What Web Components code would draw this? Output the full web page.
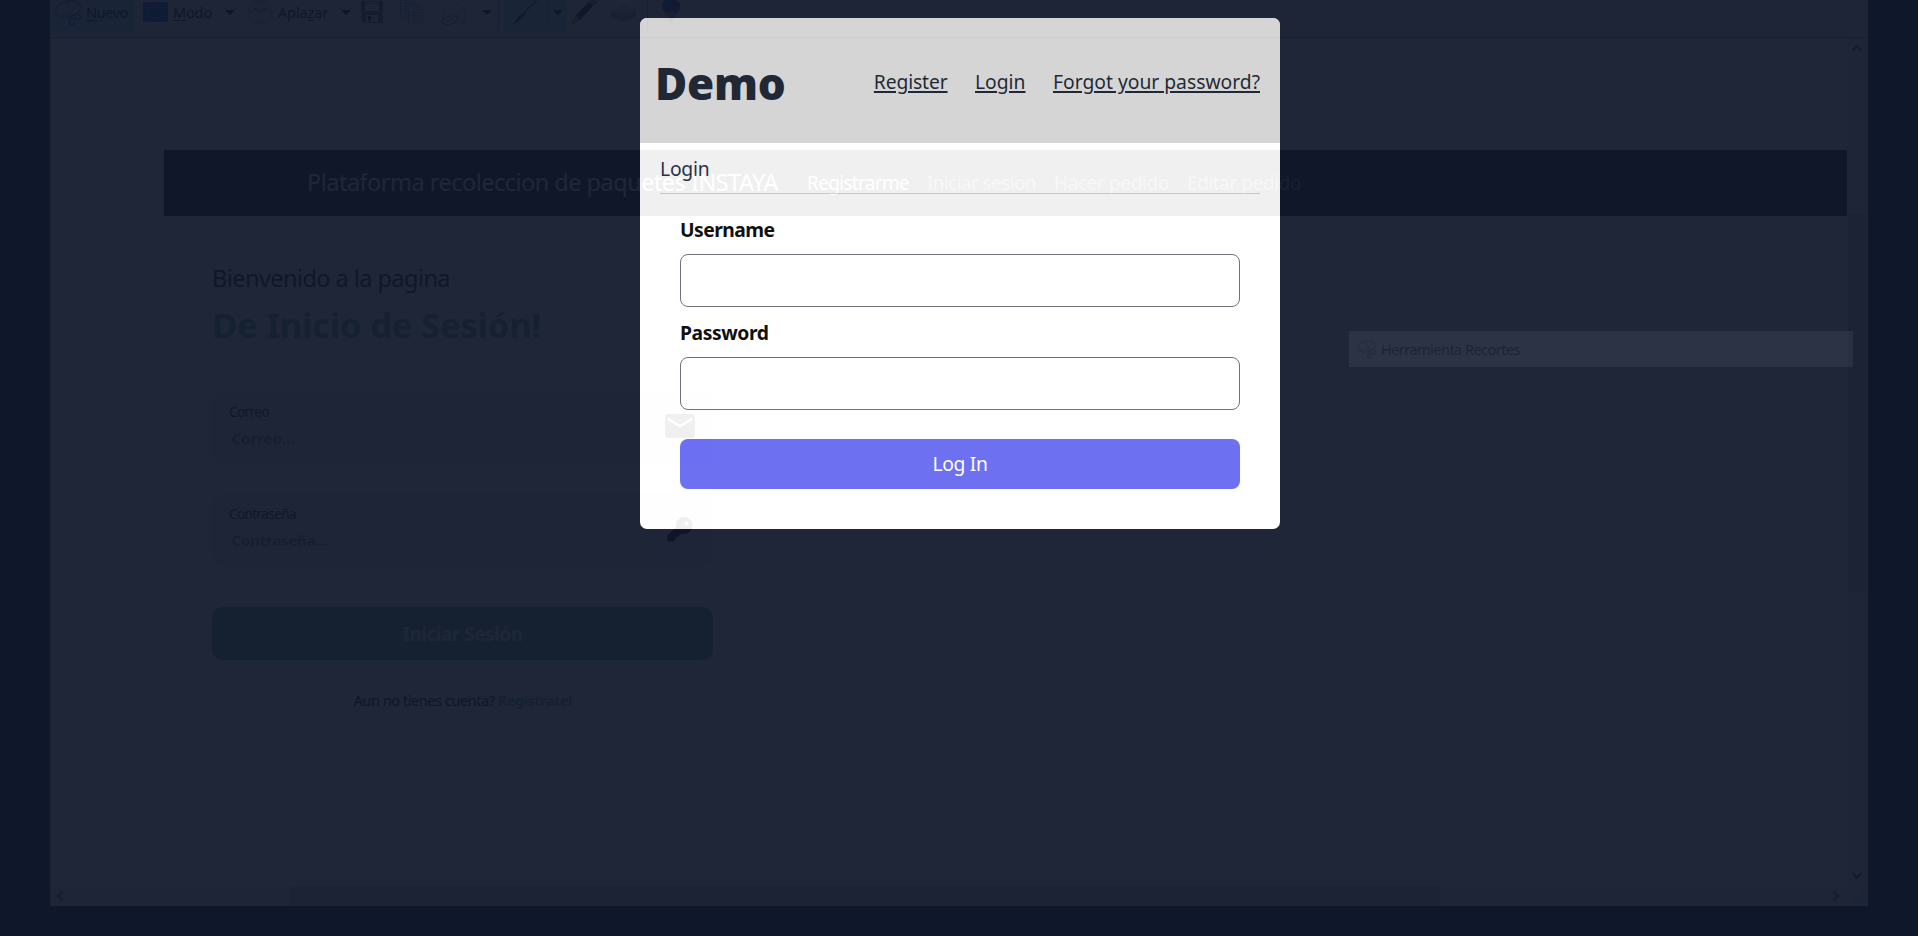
<!DOCTYPE html>
<html lang="es">
<head>
<meta charset="utf-8">
<title>Demo</title>
<style>
html,body{margin:0;height:100%;overflow:hidden;background:#0f172a}
body{font-family:"Noto Sans","Open Sans",sans-serif;position:relative}
</style>
</head>
<body>
<demo-card></demo-card>
<snip-ghost></snip-ghost>
<script>
const define = (name, html, after) => {
  const t = document.createElement('template');
  t.innerHTML = html;
  customElements.define(name, class extends HTMLElement {
    constructor() {
      super();
      this.attachShadow({ mode: 'open' }).append(t.content.cloneNode(true));
    }
    connectedCallback() { if (after) after(this, this.shadowRoot); }
  });
};

/* One line of text set to an exact advance width through its tracking. */
define('fit-text', `<style>:host{display:block;white-space:nowrap;flex:none}span{display:inline-block;text-decoration:var(--line,none);text-decoration-thickness:2px;text-underline-offset:1.5px}</style><span><slot></slot></span>`,
  (el, root) => {
    const w = parseFloat(el.getAttribute('w'));
    const span = root.querySelector('span');
    const n = el.textContent.length;
    span.style.letterSpacing = ((w - span.getBoundingClientRect().width) / n) + 'px';
    el.style.width = w + 'px';
  });

define('form-field', `<style>
:host{display:block;height:103px}
.l{font-size:19.3px;font-weight:700;line-height:30px;height:30px;color:#000;margin:-2px 0 9px}
input{display:block;box-sizing:border-box;width:100%;height:53px;border:1px solid #64697a;border-radius:8px;background:#fff;padding:0 15px;outline:0}
</style><div class="l"><slot></slot></div><input>`);

define('demo-card', `<style>
:host{display:block;box-sizing:border-box;width:640px;height:529px;padding-top:18px;margin:0 auto 0 640px}
.card{height:511px;border-radius:7px;background:#fff;overflow:hidden}
header{height:125px;background:#d3d3d3;display:flex;justify-content:space-between;align-items:flex-start;box-sizing:border-box;padding:0 20px 0 15px;color:#111827}
h1{margin:34.500px 0 0;font-size:44px;line-height:60px;font-weight:900}
nav{display:flex;gap:27.5px;margin-top:49px;font-size:19.3px;line-height:30px;--line:underline}
.t{margin:0 20px;height:51px;border-bottom:1px solid #d3d3d3;font-size:19.3px;line-height:30px;color:#27344d;box-sizing:border-box;padding-top:11px}
form{display:block;margin:0 40px;padding-top:23px}
form-field{display:flow-root}
button{display:flex;justify-content:center;align-items:center;width:100%;height:50px;border:0;border-radius:8px;background:#6366f1;color:#fff;font:19.3px/30px "Noto Sans",sans-serif;margin-top:16px;padding:0}
</style>
<div class="card">
<header><h1><fit-text w="130.5">Demo</fit-text></h1>
<nav><fit-text w="73.7">Register</fit-text><fit-text w="50.5">Login</fit-text><fit-text w="207">Forgot your password?</fit-text></nav></header>
<div class="t"><fit-text w="49.5">Login</fit-text></div>
<form><form-field><fit-text w="94.5">Username</fit-text></form-field><form-field><fit-text w="88.5">Password</fit-text></form-field>
<button type="button"><fit-text w="55">Log In</fit-text></button></form>
</div>`);

define('drop-arrow', `<style>:host{display:block;width:10px;height:5px;flex:none}svg{display:block}</style><svg width="10" height="5"><path d="M0 0h10L5 5z" fill="#111"/></svg>`);

define('scissors-icon', `<style>:host{display:block;flex:none;opacity:.75}svg{display:block;width:100%;height:100%}</style>
<svg viewBox="0 0 27 27" fill="none"><ellipse cx="13" cy="9" rx="12.5" ry="8" transform="rotate(-14 13 9)" stroke="#e8242f" stroke-width="1.5"/><path d="M4 15 19 14M11 1l7 16M23 2 14 16" stroke="#999" stroke-width="1.5"/><ellipse cx="23" cy="17" rx="3.2" ry="2.4" transform="rotate(35 23 17)" stroke="#1280e8" stroke-width="2"/><ellipse cx="17" cy="22" rx="2.3" ry="3.6" stroke="#1280e8" stroke-width="2"/></svg>`);

define('snip-toolbar', `<style>
:host{display:flex;align-items:flex-start;height:38px;box-sizing:border-box;border-bottom:1px solid #999;background:#f5f6f7;font:14.5px/24px "Noto Sans",sans-serif;color:#222;overflow:hidden}
svg{display:block;flex:none}
.hl{background:#bce4f6;height:32px;display:flex;align-items:flex-start;flex:none;box-sizing:border-box}
u{text-underline-offset:2px}
.sep{width:1px;height:31px;background:#aaa;flex:none}
.soft{opacity:.7}
drop-arrow{margin-top:10px}
fit-text{margin-top:-.5px}
</style>
<div class="hl" style="width:84px;padding-left:5px"><scissors-icon style="width:27px;height:27px"></scissors-icon><fit-text w="42" style="margin-left:4px"><u>N</u>uevo</fit-text></div>
<svg width="25" height="20" style="margin:2px 0 0 9px"><path fill="#0078d7" d="M0 0h25v20H0z"/><path d="M5.500 5.500h13v10h-13z" fill="#0064b8" stroke="#c8e4ff" stroke-dasharray="1.500 1.500"/></svg>
<fit-text w="39" style="margin-left:5px"><u>M</u>odo</fit-text>
<drop-arrow style="margin-left:13px"></drop-arrow>
<svg class="soft" width="26" height="26" style="margin:-1px 0 0 12px" viewBox="0 0 26 26"><circle cx="13" cy="13" r="11.500" fill="#cfdce6" stroke="#a2adb6" stroke-width="2"/><path d="M7 9l5 4.500L20 9" fill="none" stroke="#333" stroke-width="1.400"/><path d="M13 3v2M13 21v2M3 13h2M21 13h2" stroke="#555"/></svg>
<fit-text w="50" style="margin-left:5px">Apla<u>z</u>ar</fit-text>
<drop-arrow style="margin-left:13px"></drop-arrow>
<svg width="22" height="22" style="margin:1px 0 0 10px"><path d="M0 0h22v22H3l-3-3z" fill="#626a7a"/><path d="M4 1h14v9H4z" fill="#eef4fa"/><path d="M4 2h14v1H4z" fill="#5aa9dd"/><path d="M5 14h12v7H5z" fill="#e6e6e6"/><path d="M7 15h3v5H7z" fill="#333"/></svg>
<svg class="soft" width="25" height="25" style="margin:0 0 0 17px" fill="#d8eafa" stroke="#7c94ac"><path d="M.5-1h12l2 2v17H.5z"/><path d="M8.500 5.500h10l4 4v14.500h-14z"/><path d="M18.500 5.500v4h4M11 12.500h9M11 15.500h9M11 18.500h9M11 21.500h7M3 3.500h8M3 6.500h5M3 9.500h5" fill="none" stroke="#5b9bd0"/></svg>
<svg class="soft" width="26" height="26" style="margin:0 0 0 16px" fill="none" stroke="#999"><path d="M2 24V9L13 1l11 8v14H14"/><path d="M2 9l11 8L24 9M24 23l-8-8"/><ellipse cx="8.500" cy="20.500" rx="8" ry="4" transform="rotate(-16 8.500 20.500)" stroke="#777" stroke-width="1.500"/><path d="M5 21l7-2"/></svg>
<drop-arrow style="margin-left:15px"></drop-arrow>
<div class="sep" style="margin-left:6px"></div>
<div class="hl" style="width:63px;margin-left:5px"><svg width="44" height="31"><path d="M9 25l5-8 6-5 2 2-5 5z" fill="#2b3038"/><path d="M18 15L34-1" stroke="#728490" stroke-width="1.800"/></svg><div class="sep" style="opacity:.6"></div><drop-arrow style="margin-left:4px"></drop-arrow></div>
<svg width="26" height="26" style="margin:0 0 0 4px"><path d="M4 16L20 0h4l2 2L9 20z" fill="#23262c"/><path d="M17 2l3-3h5l1 4-4 3zM4 15l5 5-7 4-2-1z" fill="#a5a02c"/></svg>
<svg class="soft" width="25" height="17" style="margin:5px 0 0 14px"><path d="M0 7L12 0l13 5v6l-12 6-13-4z" fill="#bbb7c2"/><path d="M0 7l13 4v6L0 13zM13 11l12-6v6l-12 6z" fill="#88889a"/></svg>
<div class="sep" style="margin-left:11px"></div>
<svg width="18" height="24" style="margin:0 0 0 14px"><path d="M0 6a9 8 0 0 1 18 0c0 6-5 8-8 16C8 14 0 12 0 6z" fill="#2a6fe0"/><path d="M3 12l12 0-6 11z" fill="#e48a9c"/><path d="M9-2a9 8 0 0 1 9 8c0 3-1 5-3 6L9 8z" fill="#503aaf"/></svg>`);

define('ghost-field', `<style>
:host{display:flex;justify-content:space-between;box-sizing:border-box;width:501px;height:73px;border-radius:10px;background:#f4f4f4;padding:0 18px 0 17px}
.l{font-size:13.500px;line-height:20px;margin-top:11px;color:#212529}
.v{font-size:15px;line-height:24px;margin:4px 0 0 2.500px;font-weight:700;color:#80858a}
</style><div><div class="l"><slot name="label"></slot></div><div class="v"><slot name="value"></slot></div></div><slot name="icon"></slot>`);

define('store-page', `<style>
:host{display:block;background:#fff;overflow:hidden;font-family:"Noto Sans",sans-serif}
.bar{margin:112px 0 0 113px;height:66px;background:#212529;display:flex;box-sizing:border-box;padding-left:143px;color:#fff;font-size:19px;line-height:30px}
.bar .b{font-size:23.500px;line-height:36px;margin:14px 29px 0 0}
.bar fit-text{margin:18px 18px 0 0}
.dim{color:rgba(255,255,255,.52)}
main{margin-left:161px;width:501px}
.w{font-size:23.500px;line-height:36px;padding-top:44px;color:#212529}
.h{font-size:34.500px;line-height:50px;font-weight:700;color:#70ba99;margin-top:4px}
ghost-field svg{display:block}
.go{height:53px;border-radius:10px;background:#70ba99;margin-top:41px;display:flex;justify-content:center;align-items:center;font-size:18.800px;line-height:30px;font-weight:700;color:#fff}
.go fit-text{margin-top:1px}
.r{display:flex;gap:3px;justify-content:center;margin-top:27.500px;font-size:14.800px;line-height:24px;color:#111}
.r b{color:#70ba99}
</style>
<div class="bar"><fit-text class="b" w="471">Plataforma recoleccion de paquetes INSTAYA</fit-text><fit-text w="102">Registrarme</fit-text><fit-text class="dim" w="109">Iniciar sesion</fit-text><fit-text class="dim" w="115">Hacer pedido</fit-text><fit-text class="dim" w="114">Editar pedido</fit-text></div>
<main>
<div class="w"><fit-text w="238">Bienvenido a la pagina</fit-text></div>
<div class="h"><fit-text w="329">De Inicio de Sesión!</fit-text></div>
<ghost-field style="margin-top:41px"><fit-text slot="label" w="40">Correo</fit-text><fit-text slot="value" w="63">Correo...</fit-text>
<svg slot="icon" width="30" height="24" style="margin-top:23px"><rect width="30" height="24" rx="3" fill="#222"/><path d="M3.500 5L12 10.500q3 2 6 0L26.500 5" fill="none" stroke="#fff" stroke-width="2.400" stroke-linecap="round"/></svg></ghost-field>
<ghost-field style="margin-top:29px"><fit-text slot="label" w="67">Contraseña</fit-text><fit-text slot="value" w="96">Contraseña...</fit-text>
<svg slot="icon" width="26" height="25" style="margin:24px 2px 0 0"><path fill-rule="evenodd" d="M17 0a8.500 8.500 0 0 1 0 17h-3l-3 3H9v2l-2.500 2.500H1L0 23v-4l9-9A8.500 8.500 0 0 1 17 0zm2.500 4.500a2 2 0 1 0 .1 4 2 2 0 0 0-.1-4z" fill="#111"/></svg></ghost-field>
<div class="go"><fit-text w="120">Iniciar Sesión</fit-text></div>
<div class="r"><fit-text w="141">Aun no tienes cuenta?</fit-text><b><fit-text w="74">Registrate!</fit-text></b></div>
</main>`);

define('scroll-bar', `<style>
:host{display:flex;justify-content:space-between;align-items:center;background:#f0f0f0;box-sizing:border-box}
:host([vertical]){flex-direction:column}
svg{display:block;flex:none}
.thumb{background:#d6d6d6;flex:none}
:host([vertical]) .thumb{width:18px;height:379px;margin:161px 0 auto}
:host(:not([vertical])) .thumb{height:18px;width:1150px;margin:0 auto 0 226px}
:host([vertical]) svg{transform:rotate(90deg)}
path{fill:none;stroke:#555;stroke-width:2}
</style><svg width="8" height="10"><path d="M7 .5L2 5l5 4.500"/></svg><div class="thumb"></div><svg width="8" height="10"><path d="M1 .5L6 5 1 9.500"/></svg>`);

define('snip-window', `<style>
:host{display:block;position:absolute;left:1349px;top:331px;width:504px;height:330px;opacity:.06}
.t{height:36px;background:#fff;display:flex;box-sizing:border-box;padding:9px 0 0 8px;font:14.500px/24px "Noto Sans",sans-serif;color:#000}
fit-text{margin:-3.500px 0 0 4px}
.b{height:294px;background:rgba(255,255,255,.06)}
</style><div class="t"><scissors-icon style="width:20px;height:19px"></scissors-icon><fit-text w="139">Herramienta Recortes</fit-text></div><div class="b"></div>`);

/* Translucent capture window that floats over the whole page. */
define('snip-ghost', `<style>
:host{position:absolute;inset:0;pointer-events:none;display:block}
.win{position:absolute;left:50px;top:0;width:1817.500px;height:906px;opacity:.061;background:#d8e4e8}
.body{display:grid;grid-template-columns:1796px 20px;grid-template-rows:848px 19px;margin-left:1px}
.grip{background:#f0f0f0}
.grip svg{display:block;margin:6px 0 0 6px}
</style>
<div class="win"><snip-toolbar></snip-toolbar>
<div class="body"><store-page></store-page><scroll-bar vertical style="padding:5px 0 5.500px"></scroll-bar><scroll-bar style="padding:0 7px 0 5px"></scroll-bar><div class="grip"><svg width="12" height="12" fill="#ccc"><path d="M8 0h3v3H8zM4 4h3v3H4zM8 4h3v3H8zM0 8h3v3H0zM4 8h3v3H4zM8 8h3v3H8z"/></svg></div></div></div>
<snip-window></snip-window>`);
</script>
</body>
</html>
